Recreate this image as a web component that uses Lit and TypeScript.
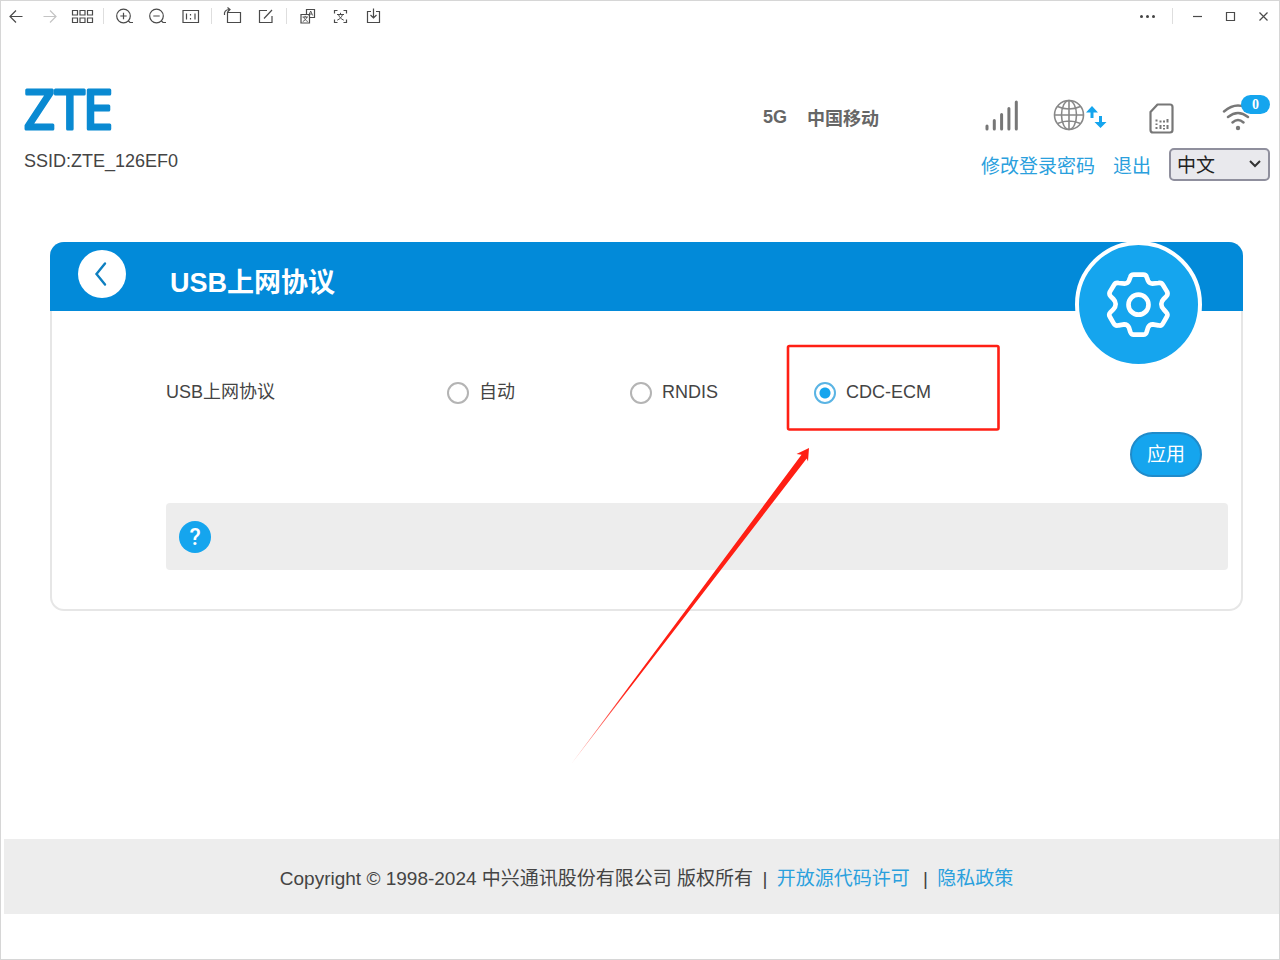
import { LitElement, html, svg, css } from "lit";
import { customElement, state } from "lit/decorators.js";

const tools: Record<string, unknown> = {
  back: svg`<path d="M22.500 16.500H10.500M16 10.500l-6 6 6 6"/>`,
  forward: svg`<path stroke="#c4c4c4" d="M10.500 16.500H22.500M17 10.500l6 6-6 6"/>`,
  grid: svg`<path d="M6.500 10.500h5v4.500h-5zM14 10.500h5v4.500h-5zM21.500 10.500h5v4.500h-5zM6.500 18h5v4.500h-5zM14 18h5v4.500h-5zM21.500 18h5v4.500h-5z"/>`,
  zoomIn: svg`<circle cx="15.500" cy="16" r="6.800"/><path d="M20 20.500l2 2H25M15.500 12.800v6.400M12.300 16h6.400"/>`,
  zoomOut: svg`<circle cx="15.500" cy="16" r="6.800"/><path d="M20 20.500l2 2H25M12.300 16h6.400"/>`,
  actual: svg`<path d="M9 10.500h15.500v12H9zM12.500 13.500v6M21 13.500v6M16.500 14v1.500M16.500 18v1.500"/>`,
  rotate: svg`<path d="M11.500 12.500h13v10h-13zM8.500 15c-.5-3 1-5.500 5-5.500M11.500 7.500l2.500 2-2.500 2.500"/>`,
  edit: svg`<path d="M18 10.500h-7.500v12h12.500V16M15 18.500l8-8.500"/>`,
  translate: svg`<path d="M15.500 14V9.500h8v8H19"/><path d="M10 14.500h8.500v8.500H10z"/><path stroke-width=".9" d="M17.700 15.500l2-4.500 2 4.500M18.400 14h2.600M11.500 17h5.500M14.200 15.800V17M15.800 17c-.5 2-2 3.500-4 4.500M12.800 17c.5 2 2 3.500 4 4.500"/>`,
  scan: svg`<path d="M10.500 13.500v-3h3M19.500 10.500h3v3M22.500 19.500v3h-3M13.500 22.500h-3v-3"/><path stroke-width="1" d="M13 14.500h7M16.500 12.800v1.700M18.500 14.500c-.7 2.500-2.500 4.500-5.300 5.700M14.500 14.500c.7 2.500 2.500 4.500 5.300 5.700"/>`,
  save: svg`<path d="M14 11.500h-3.500v11h12v-11H19M16.500 8.500v9.500M13.500 15l3 3 3-3"/>`,
  more: svg`<g fill="#444" stroke="none"><circle cx="10.500" cy="16.500" r="1.500"/><circle cx="16.500" cy="16.500" r="1.500"/><circle cx="22.500" cy="16.500" r="1.500"/></g>`,
  minimize: svg`<path d="M12 16.500h9"/>`,
  maximize: svg`<path d="M12.500 12.500h8v8h-8z"/>`,
  close: svg`<path d="M12.500 12.500l8 8M20.500 12.500l-8 8"/>`,
};

@customElement("viewer-toolbar")
class ViewerToolbar extends LitElement {
  static styles = css`
    :host { display: flex; height: 32px; }
    .tool { width: 33px; height: 32px; padding: 0; border: 0; background: none; }
    .icon { display: block; fill: none; stroke: #4a4a4a; stroke-width: 1.2; }
    .sep { width: 1px; height: 16px; margin: 8px 4px; background: #dedede; }
    .wide { margin: 8px; }
    .spacer { flex: 1; }
  `;

  private tool(name: string, label: string) {
    return html`<button class="tool" aria-label=${label}>
      <svg class="icon" width="33" height="32" viewBox="0 0 33 32">${tools[name]}</svg>
    </button>`;
  }

  render() {
    return html`
      ${this.tool("back", "后退")}${this.tool("forward", "前进")}${this.tool("grid", "缩略图")}
      <span class="sep"></span>
      ${this.tool("zoomIn", "放大")}${this.tool("zoomOut", "缩小")}${this.tool("actual", "原始大小")}
      <span class="sep"></span>
      ${this.tool("rotate", "旋转")}${this.tool("edit", "编辑")}
      <span class="sep"></span>
      ${this.tool("translate", "翻译")}${this.tool("scan", "文字识别")}${this.tool("save", "保存")}
      <span class="spacer"></span>
      ${this.tool("more", "更多")}
      <span class="sep wide"></span>
      ${this.tool("minimize", "最小化")}${this.tool("maximize", "最大化")}${this.tool("close", "关闭")}
    `;
  }
}

@customElement("router-header")
class RouterHeader extends LitElement {
  static styles = css`
    :host { display: flex; justify-content: space-between; padding: 52px 10px 0 24px; }
    .logo { display: block; overflow: visible; }
    .logo-text {
      font: 400 54px "Open Sans", sans-serif;
      fill: #0a8ad2; stroke: #0a8ad2; stroke-width: 3px; stroke-linejoin: round;
    }
    .ssid { margin-top: 15px; line-height: 24px; }
    .side { display: flex; flex-direction: column; align-items: flex-end; gap: 13px; margin-top: 15px; }
    .status { display: flex; align-items: center; height: 36px; font-weight: bold; color: #666; }
    .carrier { margin: 0 106px 0 20px; }
    .signal { margin-right: 34px; }
    .globe { margin-right: 42px; }
    .sim { margin-right: 48px; }
    .icon { display: block; }
    .wifi { position: relative; margin-right: 16px; }
    .badge {
      position: absolute; left: 19px; top: -4px; width: 29px; height: 19px; border-radius: 10px;
      background: #15a5ee; color: #fff; font: bold 14px/19px "Liberation Serif", serif; text-align: center;
    }
    .account { display: flex; align-items: center; gap: 18px; font-size: 19px; }
    .link { color: #2aa0dd; text-decoration: none; }
    .lang { position: relative; }
    .select {
      appearance: none; display: block; width: 101px; height: 33px; padding: 2px 6px 0; box-sizing: border-box;
      border: 2px solid #8f8f9d; border-radius: 5px; background: #e9e9ed; color: #222;
      font: 19px "Liberation Sans", "Noto Sans CJK SC", sans-serif;
    }
    .chevron { position: absolute; right: 9px; top: 11px; pointer-events: none; }
  `;

  render() {
    return html`
      <div>
        <svg class="logo" width="88" height="50" role="img" aria-label="ZTE">
          <text class="logo-text" y="45"><tspan x="0">Z</tspan><tspan x="31">T</tspan><tspan x="59">E</tspan></text>
        </svg>
        <div class="ssid">SSID:ZTE_126EF0</div>
      </div>
      <div class="side">
        <div class="status">
          <span>5G</span><span class="carrier">中国移动</span>
          <svg class="icon signal" width="34" height="36" fill="none" stroke="#777" stroke-width="3" stroke-linecap="round">
            <path d="M2 27v3M9.300 21.500v8.500M16.600 15.500v14.500M23.900 9.500v20.500M31.300 3v27"/>
          </svg>
          <svg class="icon globe" width="54" height="36" fill="none" stroke="#888" stroke-width="1.600">
            <circle cx="16" cy="16" r="14.500"/><ellipse cx="16" cy="16" rx="7.500" ry="14.500"/>
            <path d="M16 1.500v29M1.500 16h29M4.500 7.500q11.500 5 23 0M4.500 24.500q11.500-5 23 0"/>
            <g fill="#15a5ee" stroke="none">
              <path d="M33 13.500l6-6.500 6 6.500h-4.500v5.500h-3v-5.500zM41.500 23l6 6 6-6H49v-6h-3v6z"/>
            </g>
          </svg>
          <svg class="icon sim" width="25" height="36" fill="none" stroke="#777" stroke-width="2.200" stroke-linejoin="round">
            <path d="M8.500 5.500H21q2.500 0 2.500 2.500v23q0 2.500-2.500 2.500H4q-2.500 0-2.500-2.500V13z"/>
            <path stroke-width="2" d="M7.500 20.500v2M7.500 24.500v1.500M7.500 28v2M11.500 21.500v2M11.500 26v4M15 21.500v2M15 26v1.500M15 29v1.500M18.500 20v3.500M18.500 26v4"/>
          </svg>
          <div class="wifi">
            <svg class="icon" width="32" height="36" fill="none" stroke="#777" stroke-width="2.400" stroke-linecap="round">
              <path d="M2 12.500q14-12 28 0M6 18q10-8 20 0M10.500 23.500q5.500-5 11 0"/>
              <circle cx="16" cy="29" r="2.200" fill="#777" stroke="none"/>
            </svg>
            <span class="badge">0</span>
          </div>
        </div>
        <div class="account">
          <a class="link" href="#password">修改登录密码</a>
          <a class="link" href="#logout">退出</a>
          <div class="lang">
            <select class="select" aria-label="语言"><option>中文</option></select>
            <svg class="chevron" width="12" height="10" fill="none" stroke="#333" stroke-width="2"><path d="M1 2l5 5L11 2"/></svg>
          </div>
        </div>
      </div>
    `;
  }
}

@customElement("usb-protocol-card")
class UsbProtocolCard extends LitElement {
  @state() private protocol = "CDC-ECM";

  static styles = css`
    :host { display: block; position: relative; border-radius: 14px; box-shadow: inset 0 0 0 2px #e6e6e6; }
    .head {
      display: flex; align-items: flex-start; height: 69px; padding-left: 28px; box-sizing: border-box;
      border-radius: 14px 14px 0 0; background: #028ad9;
    }
    .back { width: 48px; height: 48px; margin-top: 8px; padding: 0; border: 0; border-radius: 50%; background: #fff; }
    .icon { display: block; }
    .title { margin: 21px 0 0 44px; font-size: 27px; line-height: 40px; color: #fff; }
    .gear {
      position: absolute; right: 41px; top: -1px; width: 127px; height: 127px; box-sizing: border-box;
      display: grid; place-items: center; border: 4px solid #fff; border-radius: 50%; background: #15a5ee;
    }
    .form { padding: 69px 15px 41px 116px; }
    .row {
      display: grid; grid-template-columns: 281fr 183fr 184fr 414fr; align-items: center; line-height: 24px;
    }
    .option { position: relative; display: flex; align-items: center; gap: 10px; }
    .radio {
      appearance: none; width: 22px; height: 22px; margin: 2px 0 0; box-sizing: border-box;
      border: 2px solid #b4b4b4; border-radius: 50%; background: #fff;
    }
    .radio:checked { border-color: #5ab4e4; background: radial-gradient(circle, #15a5ee 5px, #fff 6px); }
    .mark { position: absolute; left: -244px; top: -37px; pointer-events: none; z-index: 1; }
    .actions { display: flex; justify-content: flex-end; margin: 28px 26px 26px 0; }
    .apply {
      width: 72px; height: 45px; padding: 0 0 4px; border: 2px solid #208bca; border-radius: 23px;
      background: #15a5ee; color: #fff; font: 19px "Liberation Sans", "Noto Sans CJK SC", sans-serif;
    }
    .help { display: flex; align-items: center; height: 67px; padding-left: 13px; border-radius: 4px; background: #ededed; }
    .help-button {
      width: 32px; height: 32px; padding: 2px 0 0; border: 0; border-radius: 50%;
      background: #15a5ee; color: #fff; font: 500 23px/30px Roboto, sans-serif;
    }
  `;

  private option(value: string, mark: unknown = "") {
    return html`<label class="option">
      <input class="radio" type="radio" name="protocol" .checked=${this.protocol === value}
        @change=${() => (this.protocol = value)} />
      ${value}${mark}
    </label>`;
  }

  render() {
    const mark = html`<svg class="mark" width="434" height="424" viewBox="570 343 434 424" fill="none" aria-hidden="true">
      <defs>
        <linearGradient id="fade" gradientUnits="userSpaceOnUse" x1="572" y1="763" x2="630" y2="686">
          <stop offset="0" stop-color="#ff1f14" stop-opacity=".4"/><stop offset="1" stop-color="#ff1f14"/>
        </linearGradient>
      </defs>
      <rect x="788" y="346" width="210.500" height="83.500" rx="1.500" stroke="#ff1f14" stroke-width="2.600"/>
      <path fill="url(#fade)" d="M809 448L796.500 454L801.500 454.800L572 763L806.700 458.500L808 461.500z"/>
    </svg>`;
    return html`
      <div class="head">
        <button class="back" aria-label="返回">
          <svg class="icon" width="48" height="48" fill="none" stroke="#0d7fc0" stroke-width="2.400" stroke-linecap="round">
            <path d="M27 13.500L18.500 24L27 34.500"/>
          </svg>
        </button>
        <h1 class="title">USB上网协议</h1>
      </div>
      <div class="gear">
        <svg class="icon" width="65" height="65" viewBox="200 125 195 195" fill="none" stroke="#fff" stroke-width="14" stroke-linejoin="round">
          <path d="M283 133Q275 133 273 140L269 151Q265 160 256 160L238 158Q228 156 224 164L212 184Q208 192 214 198L222 206Q229 213 229 221Q229 230 222 237L213 246Q207 252 212 260L223 279Q228 288 238 285L255 282Q265 282 269 292L273 305Q276 313 283 313H312Q320 313 322 305L326 292Q330 282 340 282L357 285Q367 288 371 279L382 260Q387 252 381 246L373 237Q366 230 366 221Q366 213 373 206L381 198Q387 192 383 184L371 164Q367 156 357 158L339 160Q330 160 326 151L322 140Q320 133 312 133Z"/>
          <circle cx="297.500" cy="223" r="30"/>
        </svg>
      </div>
      <div class="form">
        <div class="row" role="radiogroup" aria-labelledby="protocol-label">
          <span id="protocol-label">USB上网协议</span>
          ${this.option("自动")}${this.option("RNDIS")}${this.option("CDC-ECM", mark)}
        </div>
        <div class="actions"><button class="apply">应用</button></div>
        <div class="help"><button class="help-button" aria-label="帮助">?</button></div>
      </div>
    `;
  }
}

@customElement("app-root")
class AppRoot extends LitElement {
  static styles = css`
    :host {
      display: flex; flex-direction: column; min-height: 100vh; box-sizing: border-box;
      background: #fff; box-shadow: inset 0 0 0 1px #d6d6d6; color: #444;
      font: 18px "Liberation Sans", "Noto Sans CJK SC", sans-serif;
    }
    .main { flex: 1; padding: 61px 37px 61px 50px; }
    .footer {
      margin: 0 1px 46px 4px; padding: 28px 0 23px 10px; background: #ededed;
      font-size: 19px; line-height: 24px; text-align: center;
    }
    .link { color: #2aa0dd; text-decoration: none; }
    .bar { margin: 0 4px; }
    .policy { margin-left: 8px; }
  `;

  render() {
    return html`
      <viewer-toolbar></viewer-toolbar>
      <router-header></router-header>
      <main class="main"><usb-protocol-card></usb-protocol-card></main>
      <footer class="footer">
        Copyright © 1998-2024 中兴通讯股份有限公司 版权所有<span class="bar"> | </span><a class="link" href="#license">开放源代码许可</a><span class="bar policy"> | </span><a class="link" href="#privacy">隐私政策</a>
      </footer>
    `;
  }
}
